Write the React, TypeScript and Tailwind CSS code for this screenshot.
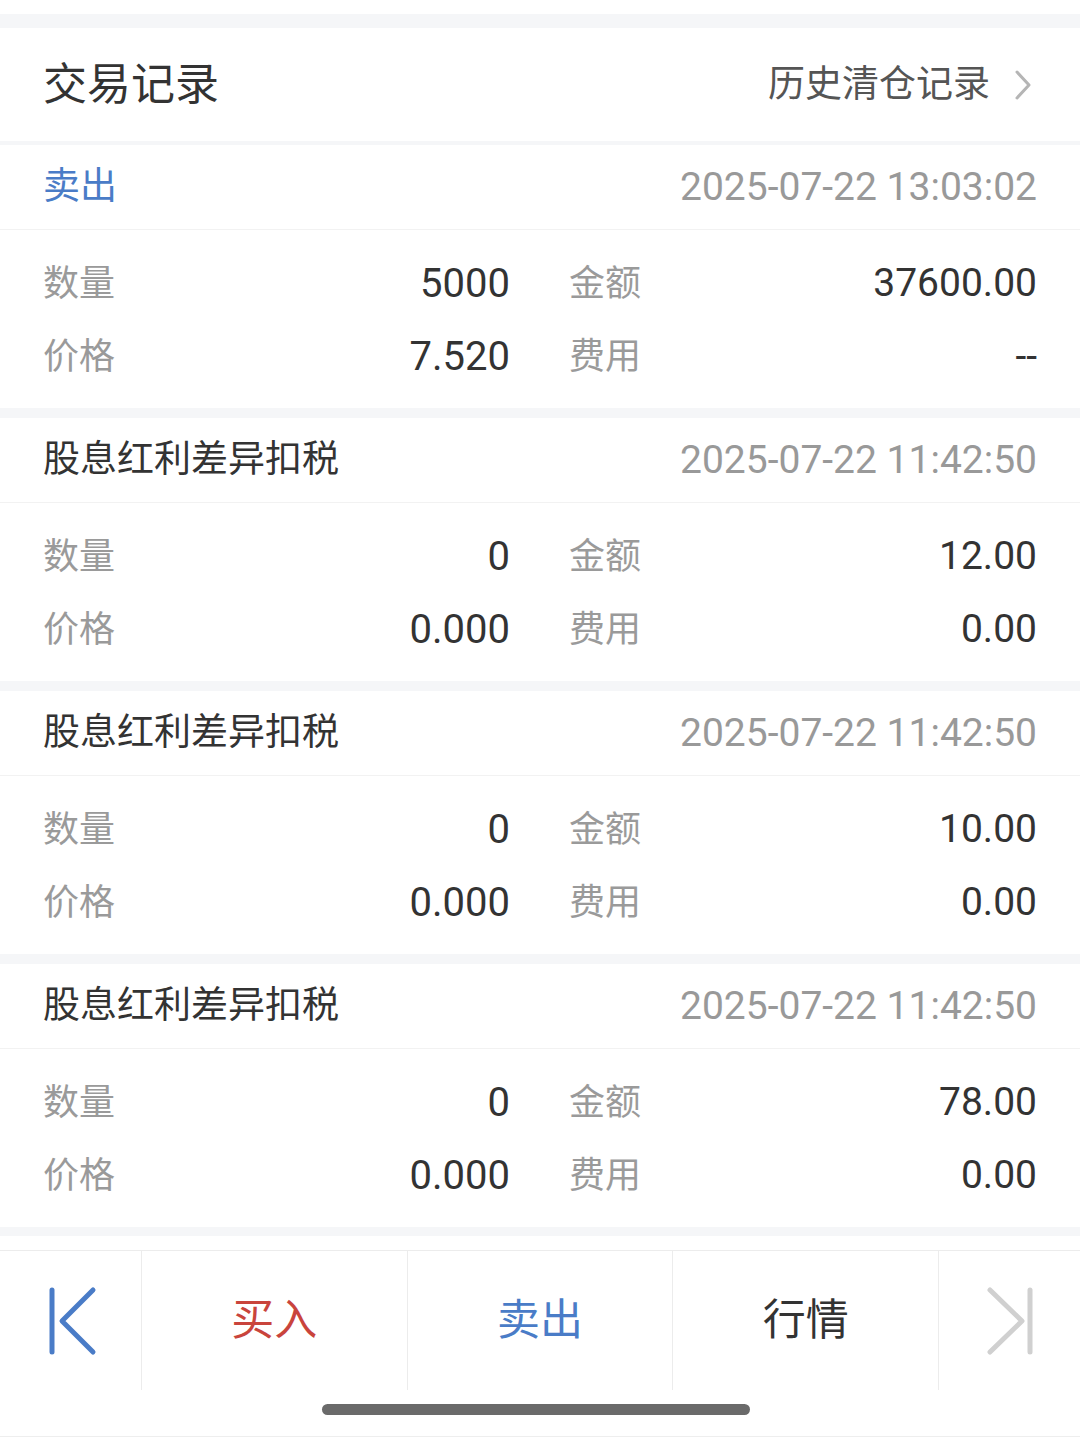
import React from 'react';

const FONT = 'font-[Roboto,"Noto_Sans_CJK_SC",sans-serif]';

interface Trade {
  type: string;
  time: string;
  qty: string;
  amount: string;
  price: string;
  fee: string;
  blue?: boolean;
}

const trades: Trade[] = [
  { type: '卖出', time: '2025-07-22 13:03:02', qty: '5000', amount: '37600.00', price: '7.520', fee: '--', blue: true },
  { type: '股息红利差异扣税', time: '2025-07-22 11:42:50', qty: '0', amount: '12.00', price: '0.000', fee: '0.00' },
  { type: '股息红利差异扣税', time: '2025-07-22 11:42:50', qty: '0', amount: '10.00', price: '0.000', fee: '0.00' },
  { type: '股息红利差异扣税', time: '2025-07-22 11:42:50', qty: '0', amount: '78.00', price: '0.000', fee: '0.00' },
];

function Row({ l1, v1, l2, v2 }: { l1: string; v1: string; l2: string; v2: string }) {
  return (
    <div className="h-[73px] flex items-center px-[43px]">
      <div className="w-[467px] flex items-center justify-between">
        <span className="text-[36px] text-[#9a9a9a]">{l1}</span>
        <span className="text-[40px] text-[#333]">{v1}</span>
      </div>
      <div className="w-[468px] ml-[59px] flex items-center justify-between">
        <span className="text-[36px] text-[#9a9a9a]">{l2}</span>
        <span className="text-[39px] text-[#333]">{v2}</span>
      </div>
    </div>
  );
}

function TradeCard({ t }: { t: Trade }) {
  return (
    <div className="bg-white">
      <div className="h-[85px] flex items-center justify-between px-[43px] border-b border-[#f2f2f2]">
        <span className={`text-[37px] ${t.blue ? 'text-[#4a7cc7]' : 'text-[#333]'}`}>{t.type}</span>
        <span className="text-[39px] text-[#999]">{t.time}</span>
      </div>
      <div className="pt-[17px] pb-[15px]">
        <Row l1="数量" v1={t.qty} l2="金额" v2={t.amount} />
        <Row l1="价格" v1={t.price} l2="费用" v2={t.fee} />
      </div>
    </div>
  );
}

export default function App() {
  return (
    <div className={`w-[1080px] h-[1437px] bg-white flex flex-col ${FONT}`}>
      <div className="h-[14px]" />
      <div className="h-[14px] bg-[#f5f6f8]" />

      <div className="h-[113px] flex items-center justify-between pl-[43px] pr-[48px]">
        <span className="text-[44px] text-[#333]">交易记录</span>
        <div className="flex items-center gap-[24px]">
          <span className="text-[37px] text-[#555]">历史清仓记录</span>
          <svg width="18" height="32" viewBox="0 0 18 32" fill="none">
            <path d="M3 3 L15 16 L3 29" stroke="#b5b5b5" strokeWidth="3" strokeLinecap="round" strokeLinejoin="round" />
          </svg>
        </div>
      </div>
      <div className="h-[4px] bg-[#f5f6f8]" />

      {trades.map((t, i) => (
        <React.Fragment key={i}>
          <TradeCard t={t} />
          <div className={`${i === trades.length - 1 ? 'h-[9px]' : 'h-[10px]'} bg-[#f5f6f8]`} />
        </React.Fragment>
      ))}

      <div className="h-[14px]" />

      {/* bottom toolbar */}
      <div className="h-[140px] border-t border-[#ececec] grid grid-cols-[141px_1fr_1fr_1fr_142px]">
        <div className="flex items-center justify-center">
          <svg width="60" height="70" viewBox="0 0 60 70" fill="none">
            <path d="M11 4 V66" stroke="#4a7cc7" strokeWidth="5" strokeLinecap="round" />
            <path d="M52 4 L21 35 L52 66" stroke="#4a7cc7" strokeWidth="5" strokeLinecap="round" strokeLinejoin="round" />
          </svg>
        </div>
        <div className="border-l border-[#ececec] flex items-center justify-center">
          <span className="text-[43px] text-[#c9443c]">买入</span>
        </div>
        <div className="border-l border-[#ececec] flex items-center justify-center">
          <span className="text-[43px] text-[#4a7cc7]">卖出</span>
        </div>
        <div className="border-l border-[#ececec] flex items-center justify-center">
          <span className="text-[43px] text-[#333]">行情</span>
        </div>
        <div className="border-l border-[#ececec] flex items-center justify-center">
          <svg width="60" height="70" viewBox="0 0 60 70" fill="none">
            <path d="M11 4 L43 35 L11 66" stroke="#d0d0d0" strokeWidth="5" strokeLinecap="round" strokeLinejoin="round" />
            <path d="M51 4 V66" stroke="#d0d0d0" strokeWidth="5" strokeLinecap="round" />
          </svg>
        </div>
      </div>

      <div className="flex-1 flex flex-col">
        <div className="h-[14px]" />
        <div className="h-[11px] w-[428px] ml-[322px] rounded-full bg-[#6a6a6a]" />
        <div className="flex-1" />
        <div className="h-px bg-[#eeeeee]" />
      </div>
    </div>
  );
}
